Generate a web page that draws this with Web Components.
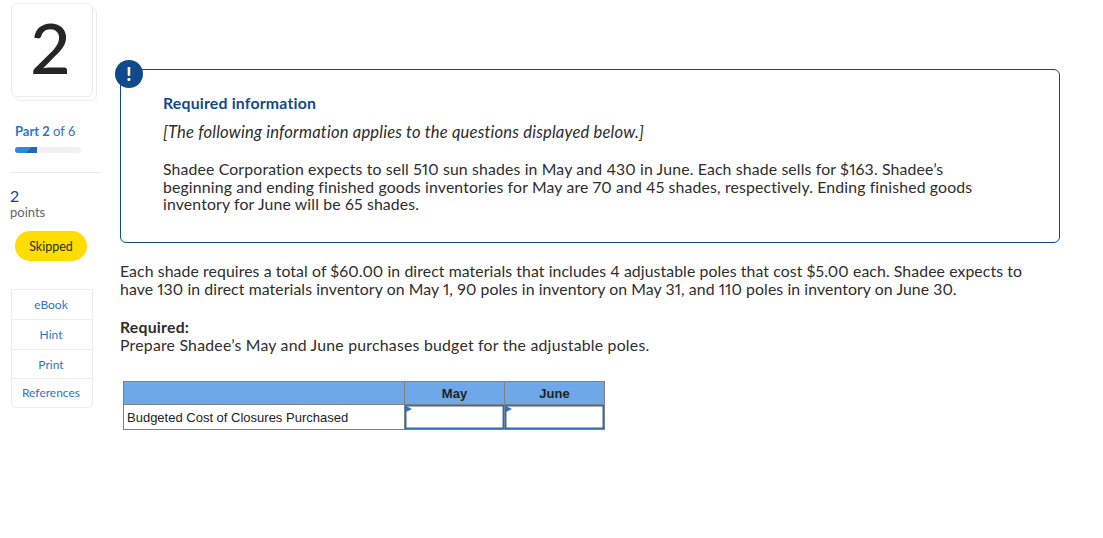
<!DOCTYPE html>
<html>
<head>
<meta charset="utf-8">
<style>
  html, body { margin: 0; }
  body { width: 1103px; height: 538px; overflow: hidden; font-family: "Lato", "Liberation Sans", sans-serif; color: #2d2d2d; font-variant-numeric: proportional-nums; }
</style>
</head>
<body>
<question-page>
  <question-sidebar slot="side" number="2" part="2" total="6" points="2" status="Skipped"></question-sidebar>
  <info-callout>
    <span slot="title">Required information</span>
    <span slot="note">[The following information applies to the questions displayed below.]</span>
    Shadee Corporation expects to sell 510 sun shades in May and 430 in June. Each shade sells for $163. Shadee’s beginning and ending finished goods inventories for May are 70 and 45 shades, respectively. Ending finished goods inventory for June will be 65 shades.
  </info-callout>
  <question-text>
    <p>Each shade requires a total of $60.00 in direct materials that includes 4 adjustable poles that cost $5.00 each. Shadee expects to have 130 in direct materials inventory on May 1, 90 poles in inventory on May 31, and 110 poles in inventory on June 30.</p>
    <p class="req"><b>Required:</b><br>Prepare Shadee’s May and June purchases budget for the adjustable poles.</p>
  </question-text>
  <budget-table></budget-table>
</question-page>

<script>
class QuestionPage extends HTMLElement {
    constructor() {
        super();
        this.attachShadow({ mode: "open" });
    }
    connectedCallback() {
        this.shadowRoot.innerHTML = `
        <style>
            :host { display: flex; align-items: flex-start; }
            main { width: 940px; margin-left: 20px; padding-top: 69px; }
        </style>
        <slot name="side"></slot>
        <main><slot></slot></main>
        `;
    }
}

class QuestionSidebar extends HTMLElement {
    constructor() {
        super();
        this.attachShadow({ mode: "open" });
    }
    connectedCallback() {
        const pct = (this.getAttribute("part") / this.getAttribute("total")) * 100;
        this.shadowRoot.innerHTML = `
        <style>
            :host { display: block; isolation: isolate; width: 90px; margin: 3px 0 0 10px; font-size: 13px; }
            .num {
                position: relative; box-sizing: border-box; width: 82px; height: 94px; margin-left: 1px;
                background: #fff; border: 1px solid #ececec; border-radius: 6px;
                display: flex; align-items: center; justify-content: center;
                font-size: 70px; font-weight: 500; color: #262626; line-height: 1; padding: 0 3px 6px 0;
            }
            .num::after {
                content: ""; position: absolute; z-index: -1; left: 3px; top: 3px; width: 82px; height: 94px;
                border: 1px solid #ececec; border-radius: 6px; box-sizing: border-box;
            }
            .part { margin: 26px 0 0 5px; color: #2f74c6; line-height: 16px; }
            .part b { font-weight: 700; }
            .bar { width: 66px; height: 6px; margin: 8px 0 0 5px; border-radius: 3px; background: #f1f1f1; overflow: hidden; }
            .bar i { display: block; height: 100%; width: ${pct}%; background: linear-gradient(135deg, #2e8ad8 60%, #1f69b8 60%); }
            hr { border: 0; border-top: 1px solid #e8e8e8; margin: 19px 0 0; width: 90px; }
            .pts { margin-top: 14px; font-size: 16px; line-height: 17px; color: #0f4a8c; }
            .lbl { color: #666; font-size: 13px; line-height: 16px; }
            .pill {
                width: 72px; height: 30px; margin: 11px 0 0 5px; border-radius: 15px; background: #ffdd00;
                display: flex; align-items: center; justify-content: center; font-size: 12.5px; color: #2d2d2d;
            }
            nav {
                box-sizing: border-box; width: 82px; height: 119px; margin: 28px 0 0 1px; border: 1px solid #ececec; border-radius: 2px 2px 5px 5px;
                display: flex; flex-direction: column;
            }
            nav span {
                display: flex; align-items: center; justify-content: center; height: 30px; flex: none; font-size: 12px; color: #2f74c6;
                border-bottom: 1px solid #ececec; box-sizing: border-box; padding-right: 2px;
            }
            nav span:nth-child(n+3) { height: 29px; }
            nav span:last-child { border-bottom: 0; padding-bottom: 2px; }
        </style>
        <div class="num">${this.getAttribute("number")}</div>
        <div class="part"><b>Part ${this.getAttribute("part")}</b> of ${this.getAttribute("total")}</div>
        <div class="bar"><i></i></div>
        <hr>
        <div class="pts">${this.getAttribute("points")}</div>
        <div class="lbl">points</div>
        <div class="pill">${this.getAttribute("status")}</div>
        <nav><span>eBook</span><span>Hint</span><span>Print</span><span>References</span></nav>
        `;
    }
}

class InfoCallout extends HTMLElement {
    constructor() {
        super();
        this.attachShadow({ mode: "open" });
    }
    connectedCallback() {
        this.shadowRoot.innerHTML = `
        <style>
            :host {
                display: block; position: relative; box-sizing: border-box; height: 174px;
                border: 1px solid #0f4a8c; border-radius: 6px; padding: 23px 70px 0 42px;
                font-size: 15.8px; line-height: 17.5px; letter-spacing: 0.15px;
            }
            .badge {
                position: absolute; left: -6px; top: -10px; width: 28px; height: 28px; border-radius: 50%;
                background: #0f4a8c; color: #fff; font-weight: 900; font-size: 18px; line-height: 28px; text-align: center;
            }
            .title { color: #0f4a8c; font-weight: 700; line-height: 20px; letter-spacing: 0.2px; }
            .note { font-style: italic; font-size: 16.6px; margin-top: 9px; line-height: 20px; letter-spacing: 0.18px; }
            .body { margin-top: 18px; }
        </style>
        <div class="badge">!</div>
        <div class="title"><slot name="title"></slot></div>
        <div class="note"><slot name="note"></slot></div>
        <div class="body"><slot></slot></div>
        `;
    }
}

class QuestionText extends HTMLElement {
    constructor() {
        super();
        this.attachShadow({ mode: "open" });
    }
    connectedCallback() {
        this.shadowRoot.innerHTML = `
        <style>
            :host { display: block; margin-top: 19px; padding-right: 20px; font-size: 15.8px; line-height: 18px; letter-spacing: 0.09px; }
            ::slotted(p) { margin: 0 0 20px; }
            ::slotted(.req) { letter-spacing: 0.23px; }
        </style>
        <slot></slot>
        `;
    }
}

class BudgetTable extends HTMLElement {
    constructor() {
        super();
        this.attachShadow({ mode: "open" });
    }
    connectedCallback() {
        this.shadowRoot.innerHTML = `
        <style>
            :host { display: block; margin: 27px 0 0 3px; font: 13px/18px "Liberation Sans", Arial, sans-serif; color: #222; }
            table { border-collapse: collapse; table-layout: fixed; width: 482px; }
            td, th { border: 1px solid #808080; padding: 0; }
            th { background: #6ea8e8; height: 21px; padding-top: 1px; font-weight: 700; text-align: center; }
            .c0 { width: 280px; }
            .c1 { width: 99px; }
            .c2 { width: 99px; }
            .lab { height: 23px; padding: 1px 0 0 3px; }
            .inp { position: relative; box-shadow: inset 0 0 0 1.5px #2f6db5; }
            .inp::before {
                content: ""; position: absolute; left: 1px; top: 1px;
                border-left: 6px solid #2f74c6; border-top: 3.5px solid transparent; border-bottom: 3.5px solid transparent;
            }
        </style>
        <table>
            <tr><th class="c0"></th><th class="c1">May</th><th class="c2">June</th></tr>
            <tr><td class="lab">Budgeted Cost of Closures Purchased</td><td class="inp"></td><td class="inp"></td></tr>
        </table>
        `;
    }
}

customElements.define("question-page", QuestionPage);
customElements.define("question-sidebar", QuestionSidebar);
customElements.define("info-callout", InfoCallout);
customElements.define("question-text", QuestionText);
customElements.define("budget-table", BudgetTable);
</script>
</body>
</html>
